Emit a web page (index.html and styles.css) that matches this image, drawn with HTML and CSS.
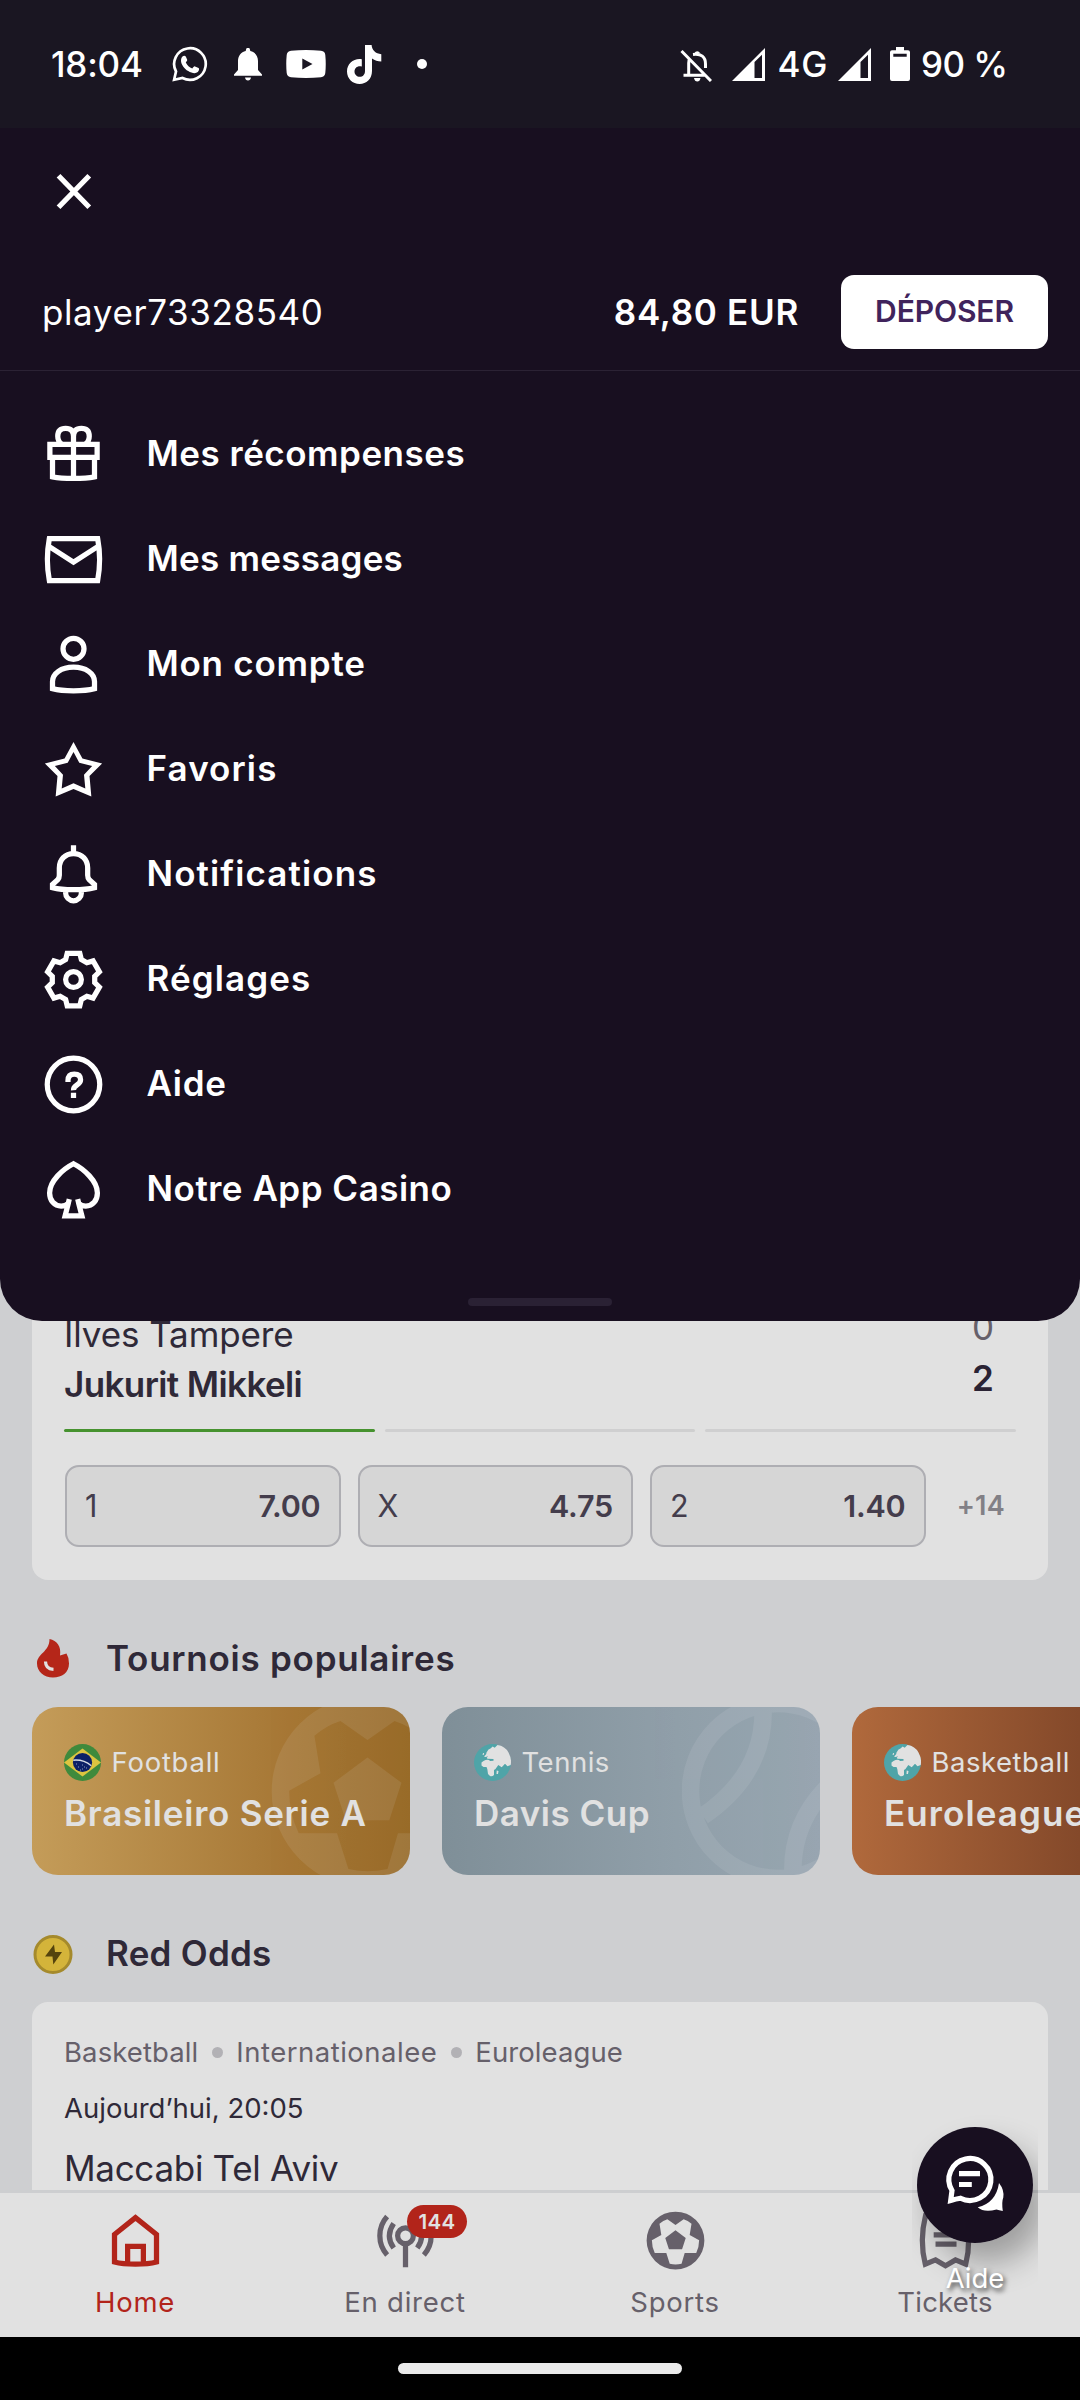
FILE: index.html
```html
<!DOCTYPE html>
<html lang="fr">
<head>
<meta charset="utf-8">
<title>Menu</title>
<link rel="stylesheet" href="styles.css">
</head>
<body>
<svg class="defs" width="0" height="0">
  <symbol id="ball" viewBox="0 0 24 24">
    <path fill-rule="evenodd" d="M12 1a11 11 0 1 0 0 22a11 11 0 1 0 0-22zM12 6.1L8.900 3.900Q7.300 4.400 5.900 5.600L6.600 9.900L3 11.900Q3 14.500 4.100 16.800H8.500L9.800 20.900Q12 21.400 14.300 20.900L15.500 16.800H19.900Q21 14.500 21 11.900L17.400 9.900L18.100 5.600Q16.700 4.400 15.100 3.900zM12 8.100L15.900 11L14.500 15.300H9.500L8.100 11z"/>
  </symbol>
  <symbol id="globe" viewBox="0 0 37 37">
    <circle cx="18.5" cy="18.5" r="18.5" fill="#4fa4a8"/>
    <path fill="#e1e1e1" d="M16.500 4.500l2.200-2 2 1.300L23.500 1Q31 2 34.500 8.500T36.700 21L33.500 22.300 31 19.700 27.700 23.300 24.300 21 21.500 25 20 26V31Q18 33 16 32L14 30 13.300 25 12.500 23H9.500L7.500 21.500V18.500L9.500 17 11.500 16Q15 15 16 17l3.500-.3V15l-6-.3-.8-1 1.500-1.500L11.500 13 10 12.500 11.500 11Q12.500 10 12.500 8.500L14.500 5.500zM9 9l1.200.3-.6 1.700H8.600zM22.700 26.500l1.800.5-.5 3h-1.500z"/>
  </symbol>
</svg>

<div class="screen">
  <header class="status">
    <span class="clock">18:04</span>
    <svg class="s-wa" viewBox="0 0 36 36" fill="none"><path d="M2.100 33.700L4 25.500A15.800 15.800 0 1 1 10.500 32z" stroke="#fff" stroke-width="2.700"/><path fill="#fff" d="M10.500 10.500c1-1 2.800-1 3.400.3l1.300 3c.3.800-1 2-1.400 2.600 1.500 3 3.500 4.700 6.500 6 .7-.5 1.800-2.300 2.700-2l3.600 1.700c1 .8.300 3-.8 4-2.300 2-6 1.200-9.600-1-4-2.600-7-6.600-7.200-10.200 0-2 .6-3.500 1.500-4.400z"/></svg>
    <svg class="s-bell" viewBox="0 0 28 33" fill="#fff"><path d="M12 1.800a2 2 0 0 1 4 0l.3 1.200C21 4 24 8 24 13v9l4 4.500v1.200H0v-1.200L4 22v-9C4 8 7 4 11.700 3zM11 29.500h6q-.5 3-3 3t-3-3z"/></svg>
    <svg class="s-yt" viewBox="0 0 40 28"><path fill="#fff" fill-rule="evenodd" d="M5 .8Q20-.8 35 .8 39 1.300 39.300 5q.9 9 0 18-.5 3.700-4.300 4.200-15 1.600-30 0Q1.200 26.700.700 23q-.9-9 0-18Q1.200 1.300 5 .800zM16.300 8.500v11l10.200-5.500z"/></svg>
    <svg class="s-tt" viewBox="0 0 35 39"><path fill="#fff" d="M18 0h6.600c.3 5 4 8.700 9.700 9.200v7.200c-3.500 0-6.500-1-9.300-3V26c0 8-5.700 13-12.300 13C5.500 39 0 33.500 0 26.500 0 18.500 7 13 14.800 14.300v7.300c-4-1.200-7.300 1.300-7.300 4.900 0 3.200 2.500 5.300 5.200 5.300 3.200 0 5.300-2.300 5.300-5.800z"/></svg>
    <i class="s-dot"></i>
    <svg class="s-off" viewBox="0 0 32 33" fill="none" stroke="#fff" stroke-width="3"><path d="M1.500 2L31 32M3.500 26.300h21M8.700 26v-12q0-2.500 1-4.600M13 5.500Q25.500 4 25.500 15v4"/><path fill="#fff" stroke="none" d="M14.500 4a3 3 0 0 1 5.500 0zM14 29h6.500q-.6 3.600-3.200 3.600T14 29z"/></svg>
    <svg class="s-sig" viewBox="0 0 33 33"><path fill="#fff" fill-rule="evenodd" d="M33 0v33H0zM22.500 14v16H30V6.800z"/></svg>
    <span class="net">4G</span>
    <svg class="s-sig s-sig2" viewBox="0 0 33 33"><path fill="#fff" fill-rule="evenodd" d="M33 0v33H0zM22.500 14v16H30V6.800z"/></svg>
    <svg class="s-bat" viewBox="0 0 20 34"><path fill="#fff" fill-rule="evenodd" d="M6 0h8v3.300h4q2 0 2 2V32q0 2-2 2H2q-2 0-2-2V5.300q0-2 2-2h4zM3.300 6.800v3h13.400v-3z"/></svg>
    <span class="pct">90 %</span>
  </header>

  <section class="drawer">
    <div class="close-row">
      <svg class="icon" viewBox="0 0 24 24"><path d="M6.300 6L18 18M18 6L6.300 18"/></svg>
    </div>
    <div class="user">
      <span class="name">player73328540</span>
      <span class="balance">84,80 EUR</span>
      <button class="deposit">DÉPOSER</button>
    </div>
    <nav class="menu">
      <a class="item"><svg class="icon" viewBox="0 0 24 24"><path d="M3 8.100h18v5H3zM4 13v7.500q3 .6 8 .600t8-.6V13M12 21V5Q12 2 9 2T6 5q0 2 1.500 3M12 5q0-3 3-3t3 3q0 2-1.500 3"/></svg><span class="ls-s">Mes récompenses</span></a>
      <a class="item"><svg class="icon" viewBox="0 0 24 24"><path d="M2.800 4Q1.300 12 2.800 20H21.200Q22.700 12 21.200 4zM2.500 6.900L12 13 21.500 6.900"/></svg><span class="ls-xs">Mes messages</span></a>
      <a class="item"><svg class="icon" viewBox="0 0 24 24"><circle cx="12" cy="6" r="4"/><path d="M4 21.200V18.500C4 15.400 7.300 13 12 13s8 2.400 8 5.500v2.700q-3 .8-8 .800t-8-.8z"/></svg><span class="ls-m">Mon compte</span></a>
      <a class="item"><svg class="icon solid" viewBox="0 0 24 24"><path fill-rule="evenodd" d="M12 1.500L15.400 7.800L22.900 9.700L18.100 14.500L18.800 22.300L12 19.400L5.200 22.300L5.900 14.500L1.100 9.700L8.600 7.800ZM12 5.300L9.800 9.400L4.900 10.700L8 14L7.500 19.200L12 17.200L16.500 19.200L16 14L19.100 10.700L14.200 9.400Z"/></svg><span class="ls-l">Favoris</span></a>
      <a class="item"><svg class="icon" viewBox="0 0 24 24"><path d="M12 .900V4C8.800 4 6.600 6.400 6.600 9.500V12.300Q6.600 13.300 6 14L4 15.800V17q3 .8 8 .800t8-.8V15.800L18 14Q17.400 13.300 17.400 12.300V9.500C17.400 6.400 15.200 4 12 4M9 18v1a3 3 0 0 0 6 0V18"/></svg><span class="ls-l">Notifications</span></a>
      <a class="item"><svg class="icon" viewBox="-12 -12 24 24"><circle r="3"/><path d="M-2.400-10L2.400-10L3-7.600L5.090-6.390L7.460-7.080L9.860-2.920L8.080-1.200L8.080 1.200L9.860 2.920L7.460 7.080L5.090 6.390L3 7.600L2.400 10L-2.400 10L-3 7.600L-5.090 6.390L-7.460 7.080L-9.860 2.920L-8.080 1.200L-8.080-1.200L-9.860-2.920L-7.460-7.080L-5.090-6.390L-3-7.600Z"/></svg><span class="ls-l">Réglages</span></a>
      <a class="item"><svg class="icon" viewBox="0 0 24 24"><circle cx="12" cy="12" r="10"/><path d="M9.900 11v-.5Q9.900 8 12.300 8t2.400 2.200Q14.700 11.300 13.300 12.200T12 14.200M12 15.100v2"/></svg><span class="ls-m">Aide</span></a>
      <a class="item"><svg class="icon" viewBox="0 0 24 24"><path d="M10.400 15.700L10 17.300Q9 18.300 7.300 18.300C4.700 18.300 2.900 16.200 2.900 13.300 2.900 8.800 8 4.200 12 2.200 16 4.200 21.100 8.800 21.100 13.300 21.100 16.200 19.300 18.300 16.700 18.300Q15 18.300 14 17.300L13.600 15.700M10.100 17L8.800 22H15.200L13.900 17"/></svg><span class="ls-s">Notre App Casino</span></a>
    </nav>
    <div class="grip"></div>
  </section>

  <main class="feed">
    <article class="card match">
      <div class="teams">
        <div class="names"><span>Ilves Tampere</span><span class="lead">Jukurit Mikkeli</span></div>
        <div class="scores"><span>0</span><span class="win">2</span></div>
      </div>
      <div class="periods"><i class="on"></i><i></i><i></i></div>
      <div class="odds">
        <div class="odd"><span>1</span><b>7.00</b></div>
        <div class="odd"><span>X</span><b>4.75</b></div>
        <div class="odd"><span>2</span><b>1.40</b></div>
        <span class="more">+14</span>
      </div>
    </article>

    <h2 class="heading">
      <svg viewBox="0 0 42 42"><path fill="#b52619" d="M17.500 1C25 2.500 29.500 8.500 28 17.500L34.500 15.500Q37 19.500 37 25.500C37 34.500 30 39.500 21 39.500S5 33.500 5 25.500C5 15.500 17.500 14 17.500 1z"/><path fill="none" stroke="#e1e1e1" stroke-width="3.200" d="M13.500 23.500q0 7.500 8 7.800"/></svg>
      <span class="ls-m">Tournois populaires</span>
    </h2>
    <div class="tournaments">
      <div class="tour gold">
        <svg class="art art-ball"><use href="#ball"/></svg>
        <div class="sport"><svg viewBox="0 0 37 37"><circle cx="18.500" cy="18.500" r="18.500" fill="#3f8a3c"/><path fill="#dcc540" d="M0 18.500L18.500 4.500 37 18.500 18.500 32.500z"/><circle cx="18.500" cy="18.500" r="9.600" fill="#0b2167"/><path d="M9.300 16.200q10-1 18 5.500" fill="none" stroke="#d5dce5" stroke-width="1.400"/><path d="M12 20h1M14 23h1M18 21h1M18 25h1M22 24h1M16 26h1M20 23h1" stroke="#8d9cc0"/></svg><span class="ls-m">Football</span></div>
        <strong class="ls-m">Brasileiro Serie A</strong>
      </div>
      <div class="tour silver">
        <svg class="art art-tennis" viewBox="-96 -96 192 192"><path d="M0-87.500a87.500 87.500 0 1 0 0 175a87.500 87.500 0 1 0 0-175zM-15-85Q-12-18-75 25M15 85Q12 18 75-25"/></svg>
        <div class="sport"><svg><use href="#globe"/></svg><span class="ls-s">Tennis</span></div>
        <strong class="ls-s">Davis Cup</strong>
      </div>
      <div class="tour bronze">
        <div class="sport"><svg><use href="#globe"/></svg><span class="ls-s">Basketball</span></div>
        <strong class="ls-l">Euroleague</strong>
      </div>
    </div>

    <h2 class="heading">
      <svg viewBox="0 0 42 42"><circle cx="21" cy="21.500" r="18" fill="#d4b43a" stroke="#a58a2c" stroke-width="3"/><path fill="#54430d" d="M22 11.500L13 23.500h7.500l.8 8L30 19h-7z"/></svg>
      <span class="ls-xs">Red Odds</span>
    </h2>
    <article class="card event">
      <div class="crumbs"><span>Basketball</span><i></i><span class="ls-s">Internationalee</span><i></i><span>Euroleague</span></div>
      <div class="date">Aujourd’hui, 20:05</div>
      <div class="team">Maccabi Tel Aviv</div>
    </article>
  </main>

  <nav class="tabs">
    <a class="tab active"><svg class="icon" viewBox="0 0 24 24"><path d="M12 3.300L4 9.700V20.200q3 .8 8 .800t8-.8V9.700zM9 21V14.200h6V21"/></svg><span class="ls-m">Home</span></a>
    <a class="tab"><svg class="icon" viewBox="0 0 24 24"><circle cx="12" cy="10.200" r="3"/><path d="M12 13v9.200M5 2.900C1.300 7 1.300 13.400 5 17.500M7.500 5.500q-3.300 4.700 0 9.400M19 2.900c3.700 4.100 3.700 10.500 0 14.600M16.500 5.500q3.300 4.700 0 9.400"/></svg><span class="ls-m">En direct</span><b class="badge">144</b></a>
    <a class="tab"><svg class="icon solid"><use href="#ball"/></svg><span class="ls-m">Sports</span></a>
    <a class="tab"><svg class="icon" viewBox="0 0 24 24"><path d="M4.400 2.500Q2 12 4.300 21L8.200 19.400 12 21.600 15.800 19.400 19.700 21Q22 12 19.600 2.500zM7.500 9.900h9M8.200 13.400h8"/></svg><span>Tickets</span></a>
  </nav>
  <footer class="gesture"><i></i></footer>

  <div class="help">
    <div class="shade"></div>
    <svg viewBox="0 0 116 116"><circle cx="58" cy="58" r="58" fill="#180f20"/><path d="M33.700 73.500L35 63.500A21 21 0 1 1 43.500 71.300Q39 72 33.700 73.500z" fill="none" stroke="#fff" stroke-width="5.200"/><path fill="#fff" d="M42 44h21v5.300H42zM42 54.900h12.800v5.200H42zM82 56Q87.500 63 86.300 70.500 84.500 75 85.800 84 82 83 79.500 82.500 67 86 60.700 80.300 79 76 82 56z"/></svg>
    <span>Aide</span>
  </div>
</div>
</body>
</html>
```
FILE: styles.css
```css
* { box-sizing: border-box; }
body { margin: 0; background: #000; font-family: Inter, "Liberation Sans", sans-serif; font-kerning: normal; }
.defs { position: absolute; }
.screen { position: relative; width: 1080px; height: 2400px; overflow: hidden; display: flex; flex-direction: column; background: #cecfd1; }
svg { display: block; flex: none; }

.ls-xs { letter-spacing: .25px; }
.ls-s { letter-spacing: .5px; }
.ls-m { letter-spacing: .75px; }
.ls-l { letter-spacing: 1.1px; }

.icon { width: 63px; height: 63px; fill: none; stroke: currentColor; stroke-width: 2; }
.icon.solid { fill: currentColor; stroke: none; }

/* status bar */
.status { height: 128px; flex: none; display: flex; align-items: center; background: #1a1622; color: #fff; padding-left: 51px; font-size: 35px; font-weight: 500; line-height: 36px; white-space: nowrap; }
.clock { width: 121px; letter-spacing: -.2px; }
.s-wa { width: 36px; height: 36px; margin-right: 26px; }
.s-bell { width: 28px; height: 33px; margin-right: 24px; }
.s-yt { width: 40px; height: 28px; margin-right: 21px; }
.s-tt { width: 35px; height: 39px; margin-right: 35px; }
.s-dot { width: 10px; height: 10px; border-radius: 50%; background: #fff; }
.s-off { width: 32px; height: 33px; margin-left: 253px; margin-top: 2px; }
.s-sig { width: 33px; height: 33px; margin-left: 19.500px; }
.net { width: 52px; margin-left: 13px; letter-spacing: .8px; }
.s-sig2 { margin-left: 8.500px; }
.s-bat { width: 20px; height: 34px; margin-left: 19px; }
.pct { margin-left: 11px; letter-spacing: -.6px; }

/* account drawer */
.drawer { position: relative; z-index: 1; flex: none; height: 1193px; background: #180f20; color: #fff; border-radius: 0 0 42px 42px; display: flex; flex-direction: column; }
.close-row { height: 124px; padding: 32px 42px 0; }
.user { height: 119px; display: flex; align-items: center; padding: 1px 32px 0 42px; border-bottom: 1px solid #2b2234; font-size: 35px; line-height: 44px; }
.name { flex: 1; letter-spacing: .6px; }
.balance { font-weight: 600; letter-spacing: .7px; margin-right: 42px; }
.deposit { width: 207px; height: 74px; border: 0; border-radius: 13px; padding: 0 0 1px; background: #fff; color: #40235c; font: 600 30px Inter, sans-serif; letter-spacing: -.1px; }
.menu { padding-top: 31px; }
.item { height: 105px; display: flex; align-items: center; gap: 41.500px; padding-left: 42px; font-size: 35px; font-weight: 600; line-height: 44px; }
.item span { margin-top: -3px; }
.grip { width: 144px; height: 8px; border-radius: 4px; background: #2a2134; margin: 56px auto 0; }

/* feed */
.feed { flex: none; height: 911px; margin-top: -42px; overflow: hidden; color: #2f2938; }
.card { margin: 0 32px; background: #e1e1e1; border-radius: 16px; }
.match { height: 301px; padding: 31px 32px 33px; }
.teams { display: flex; justify-content: space-between; height: 100px; font-size: 35px; line-height: 50px; }
.names, .scores { display: flex; flex-direction: column; }
.names { margin-top: -1px; letter-spacing: -.1px; }
.lead { font-weight: 600; letter-spacing: -.6px; }
.scores { width: 66px; margin-top: -8px; text-align: center; line-height: 51px; color: #66606a; }
.win { font-weight: 600; color: #2a2334; }
.periods { display: flex; gap: 10px; margin-top: 19px; }
.periods i { flex: 1; height: 3px; border-radius: 1.500px; background: #cfcfd0; }
.periods .on { background: #46922f; }
.odds { display: flex; gap: 17px; margin-top: 33px; padding-left: 1px; align-items: center; }
.odd { width: 275.500px; height: 82px; display: flex; justify-content: space-between; align-items: center; padding: 0 18px 2px; border: 2px solid #aeaeb3; border-radius: 14px; background: #d6d6d6; color: #443d4c; font-size: 30.500px; }
.odd b { font-weight: 600; letter-spacing: -.2px; }
.more { flex: 1; text-align: center; font-size: 27px; font-weight: 600; color: #828086; padding: 0 0 2px 3px; letter-spacing: .2px; }

.heading { height: 49px; margin: 54px 32px 24px; display: flex; align-items: center; gap: 32px; font-size: 35px; font-weight: 600; line-height: 49px; }
.heading svg { width: 42px; height: 42px; }

.tournaments { display: flex; gap: 32px; padding-left: 32px; }
.tour { position: relative; flex: none; width: 378px; height: 168px; border-radius: 26px; overflow: hidden; padding: 37px 32px 0; color: #e1e1e1; }
.gold { background: linear-gradient(90deg, #c49c59, #a57634 70%, #986b29); }
.silver { background: linear-gradient(90deg, #7f8f98, #909fa9 62%, #98a6b1); }
.bronze { background: linear-gradient(90deg, #b0693c, #84492a 60%, #6b3820); }
.art { position: absolute; }
.art-ball { left: 231px; top: -20px; width: 209px; height: 209px; fill: #e1e1e1; opacity: .1; }
.art-tennis { left: 240px; top: -12px; width: 192px; height: 192px; fill: none; stroke: #dfe3e8; stroke-width: 17.500; opacity: .11; }
.sport { position: relative; display: flex; align-items: center; gap: 10.500px; height: 37px; font-size: 27.500px; line-height: 37px; }
.sport svg { width: 37px; height: 37px; }
.tour strong { position: relative; display: block; margin-top: 10px; font-size: 35px; font-weight: 600; line-height: 44px; white-space: nowrap; }

.event { height: 260px; padding: 30px 32px 0; font-size: 27.500px; line-height: 40px; }
.crumbs { display: flex; align-items: center; color: #66606a; letter-spacing: .1px; }
.crumbs i { width: 11px; height: 11px; border-radius: 50%; background: #b2b1b5; margin: 0 13px 0 14px; }
.date { margin-top: 16px; letter-spacing: 0; }
.team { margin-top: 15px; font-size: 35px; line-height: 50px; letter-spacing: -.3px; }

/* bottom tabs */
.tabs { flex: none; height: 147px; border-top: 3px solid #cdced0; background: #e1e1e1; display: grid; grid-template-columns: repeat(4, 1fr); color: #66606a; }
.tab { position: relative; display: flex; flex-direction: column; align-items: center; gap: 13px; padding-top: 16px; font-size: 27.500px; line-height: 34px; letter-spacing: .2px; }
.tab.active { color: #b2241a; }
.badge { position: absolute; left: 137px; top: 12px; width: 60px; height: 33px; border-radius: 17px; background: #b2241a; color: #e1e1e1; font-size: 20.500px; line-height: 34px; font-weight: 600; letter-spacing: .3px; text-align: center; }
.gesture { height: 63px; background: #000; display: flex; justify-content: center; padding-top: 26px; }
.gesture i { width: 284px; height: 11px; border-radius: 6px; background: #eaeaea; }

/* floating help button */
.help { position: absolute; z-index: 2; left: 912px; top: 2110px; width: 126px; height: 200px; overflow: hidden; padding: 17px 0 0 5px; }
.help svg { position: relative; width: 116px; height: 116px; }
.shade { position: absolute; left: 5px; top: 17px; width: 116px; height: 116px; border-radius: 50%; box-shadow: 12px 20px 32px rgba(0, 0, 0, .3); }
.help span { position: relative; display: block; width: 116px; margin-top: 17px; text-align: center; color: #fff; font-size: 27.500px; line-height: 36px; text-shadow: 2px 3px 5px rgba(0, 0, 0, .75); }
```
